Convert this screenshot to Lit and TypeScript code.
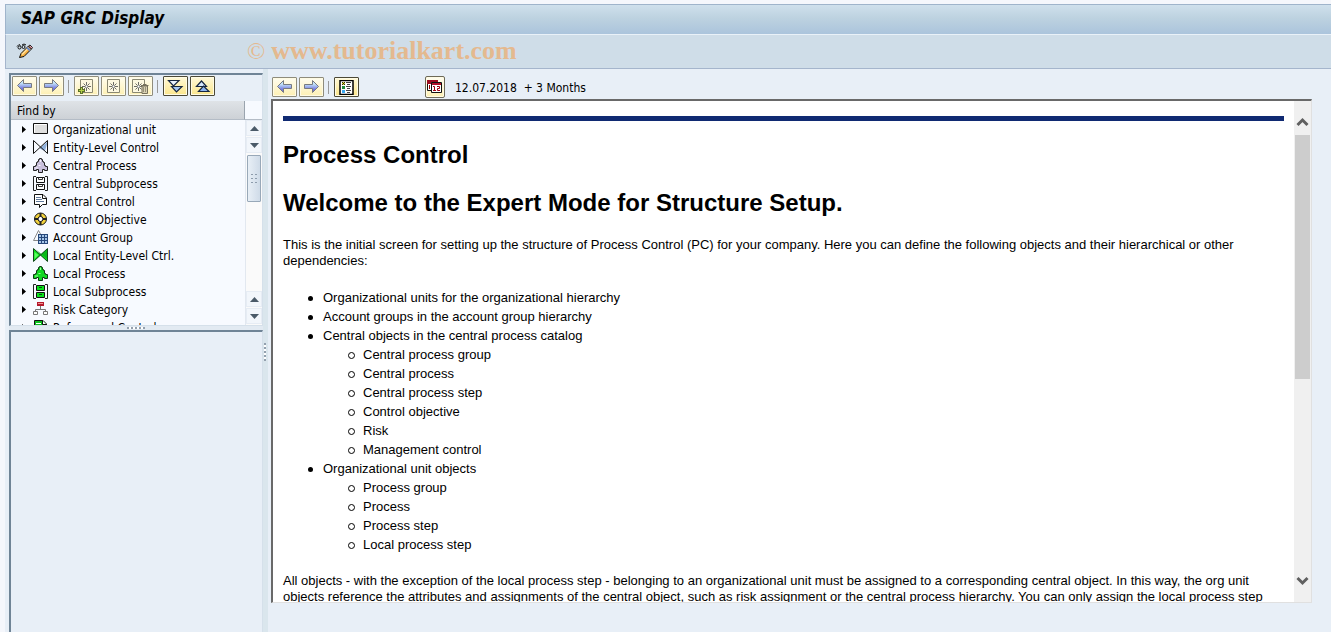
import { LitElement, html, css, svg, SVGTemplateResult } from "lit";
import { customElement, property } from "lit/decorators.js";

type Glyph = { w: number; h: number; art: SVGTemplateResult };

const arrowLeft = svg`
  <path d="M1.500 6.500 7.500 .5V4.500H15.500V8.500H7.500V12.500Z" fill="url(#ag)" stroke="#777a80"/>`;
const arrowRight = svg`
  <path d="M15.500 6.500 9.500 .5V4.500H1.500V8.500H9.500V12.500Z" fill="url(#ag)" stroke="#777a80"/>`;
const arrowFill = svg`<defs><linearGradient id="ag" x1="0" y1="0" x2="0" y2="1">
  <stop offset="0.3" stop-color="#c4e4f8"/><stop offset="0.75" stop-color="#7478e0"/></linearGradient></defs>`;
const sheet = svg`
  <path d="M2.500 .5H14.500V13.500H2.500Z" fill="#fdf8e0" stroke="#8a8872"/>
  <path d="M8.500 3V12M4 7.500H13M5.500 4.500 11.500 10.500M11.500 4.500 5.500 10.500" stroke="#6c6c66" fill="none"/>
  <path d="M7.500 6.500H9.500V8.500H7.500Z" fill="#fff"/>`;
const steps = "M6.500 .5H8.500V1.500H9.500V3.500H10.500V4.500H11.500V7.500H12.500V8.500H14.500V12.500H11.500V11.500H9.500V14.500H5.500V11.500H3.500V12.500H.5V8.500H2.500V7.500H3.500V4.500H4.500V3.500H5.500V1.500H6.500Z";
const brackets = svg`<path d="M3 .5H.5V14.500H3M12 .5H14.500V14.500H12" fill="none" stroke="#222"/>`;

const glyphs: Record<string, Glyph> = {
  back: { w: 17, h: 15, art: svg`${arrowFill}${arrowLeft}` },
  next: { w: 17, h: 15, art: svg`${arrowFill}${arrowRight}` },
  sheetAdd: { w: 17, h: 15, art: svg`${sheet}<path d="M3.500 8V15M0 11.500H7" stroke="#5a7028" stroke-width="3"/><path d="M3.500 9V14M1 11.500H6" stroke="#b6d24a"/>` },
  sheet: { w: 17, h: 15, art: sheet },
  sheetDelete: { w: 17, h: 15, art: svg`<g transform="translate(-2 0)">${sheet}</g>
    <path d="M9 6.500H16.500M11 5.500H14.500M10 7H15.500V14.500H10Z" fill="#d8d2b4" stroke="#77705c"/><path d="M11.500 8V13M13.500 8V13" stroke="#99917a"/>` },
  expandAll: { w: 17, h: 15, art: svg`<path d="M1.500 1.500H12L6.500 7Z" fill="#e8f2ff" stroke="#16263f" stroke-width="1.200"/><path d="M4.500 7.500H15L9.500 13Z" fill="#a5c8f4" stroke="#16263f" stroke-width="1.200"/>` },
  collapseAll: { w: 17, h: 15, art: svg`<path d="M2.500 7.500 7.500 2 12.500 7.500Z" fill="#d8eaff" stroke="#16263f" stroke-width="1.200"/><path d="M4.500 12.500 9.500 7 15 12.500Z" fill="#8fb6f0" stroke="#16263f" stroke-width="1.200"/>` },
  details: { w: 17, h: 15, art: svg`<path d="M2 .5H15V14.500H2Z" fill="#fff" stroke="#000" stroke-width="1.500"/>
    <path d="M4 2H7V5H4Z" fill="#e8e020"/><path d="M4 2 7 5M7 2 4 5" stroke="#222"/><path d="M4 6H7V9H4Z" fill="#1f8a3c"/><path d="M4 10H7V13H4Z" fill="#3aa8f0"/>
    <path d="M8 2.500H13M9 4.500H12M8 6.500H13M9 8.500H12M8 10.500H13M9 12.500H12" stroke="#444"/>` },
  calendar: { w: 16, h: 16, art: svg`<path d="M.5 1.500H10.500V11.500H.5Z" fill="#fff" stroke="#111"/><path d="M0 1H11V5H0Z" fill="#9c0c20"/><path d="M2.500 6V10" stroke="#900"/>
    <path d="M4.500 3.500H14.500V13.500H4.500Z" fill="#fff" stroke="#111"/><path d="M5 4H14V6H5Z" fill="#b01028"/>
    <path d="M6 7.500H7.500V11.500M6 11.500H9M10 7.500H12.500V9.500H10.500V11.500H13" fill="none" stroke="#a00010"/>` },
  toggle: { w: 18, h: 16, art: svg`<path d="M1 3.500 3 1.500 4.500 2.500M2 4.500A1.500 1.500 0 1 0 5 4.500 1.500 1.500 0 1 0 2 4.500M6 4A1.500 1.500 0 1 0 9 4 1.500 1.500 0 1 0 6 4M6 2 8 1 10 2" fill="none" stroke="#111"/>
    <path d="M3.500 14.500 5 10.500 12.500 3 15.500 6 8 13.500Z" fill="#f8b040" stroke="#111"/><path d="M6 11.500 12.500 5" stroke="#ffe3a0" stroke-width="1.500"/><path d="M12.500 3 14 2 16.500 4.500 15.500 6Z" fill="#f4a0b0" stroke="#222"/><path d="M11 4.500 14 7.500" stroke="#6888c8" stroke-width="2"/>` },
  orgUnit: { w: 16, h: 16, art: svg`<path d="M.5 1.500H14.500V11.500H.5Z" fill="#dedede" stroke="#111"/><path d="M1.500 10.500V2.500H13.500" fill="none" stroke="#fff"/>` },
  entity: { w: 16, h: 16, art: svg`<path d="M14 2V4L12 11 6.500 8.500Z" fill="#8fb0dc"/><path d="M.5 .5V13.500L14.500 .5V13.500L.5 .5" fill="none" stroke="#111"/>` },
  process: { w: 16, h: 16, art: svg`<path d=${steps} fill="#c9c0dc" stroke="#222"/><path d="M7.500 1.500V4M5.500 7.500H7.500M2 10H5" stroke="#f8f4ff"/>` },
  subprocess: { w: 16, h: 16, art: svg`${brackets}<path d="M3.500 1.500H11.500V6.500H3.500ZM3.500 8.500H11.500V13.500H3.500Z" fill="#fff" stroke="#111"/><path d="M5.500 1.500V3.500H9.500V1.500M5.500 8.500V10.500H9.500V8.500" fill="none" stroke="#333"/>` },
  control: { w: 16, h: 16, art: svg`<path d="M1.500 .5H10L13.500 4V10.500H9.500L6.500 13.500V10.500H1.500Z" fill="#fff" stroke="#111"/><path d="M9.500 .5V4.500H13.500" fill="none" stroke="#111"/><path d="M3 3.500H8M3 5.500H9M3 7.500H11" stroke="#5f789a"/>` },
  objective: { w: 16, h: 16, art: svg`<circle cx="7.500" cy="7" r="6" fill="#f2d23c" stroke="#111"/><path d="M7.500 1V13M1.500 7H13.500" stroke="#222" stroke-width="2"/><circle cx="7.500" cy="7" r="2.500" fill="#fff" stroke="#111"/>` },
  account: { w: 16, h: 16, art: svg`<path d="M5.500 .5 .5 10.500H5M5.500 .5 7.500 4" fill="none" stroke="#888"/><path d="M5 4H15V14H5Z" fill="#26477a"/><path d="M6 6H14M6 9H14M6 12H14" stroke="#a6c6e8" stroke-width="2" stroke-dasharray="2 1"/>` },
  entityLocal: { w: 16, h: 16, art: svg`<path d="M1 1V13L8 7ZM14 1V13L7 7Z" fill="#0be01c"/><path d="M3 1.500 14 11V1.500L8 7Z" fill="#08b818"/><path d="M.5 .5V13.500L14.500 .5V13.500Z" fill="none" stroke="#114a18"/><path d="M1.500 4V11L5.500 7Z" fill="#5cff60"/>` },
  processLocal: { w: 16, h: 16, art: svg`<path d=${steps} fill="#10d820" stroke="#0a3c10"/><path d="M7.500 1.500V4M5.500 7.500H7.500M2 10H5" stroke="#9cff9c"/>` },
  subprocessLocal: { w: 16, h: 16, art: svg`${brackets}<path d="M3.500 1.500H11.500V6.500H3.500ZM3.500 8.500H11.500V13.500H3.500Z" fill="#0be01c" stroke="#111"/><path d="M6 3.500H9M6 10.500H9" stroke="#0a4c14"/>` },
  risk: { w: 16, h: 16, art: svg`<path d="M7.500 4V7.500M2.500 9.500V7.500H12.500V9.500" fill="none" stroke="#777"/><path d="M4 0H11V4H4Z" fill="#b4182c"/><path d="M5 1.500H10" stroke="#f09090"/><path d="M.5 9.500H4.500V12.500H.5ZM10.500 9.500H14.500V12.500H10.500Z" fill="#fff" stroke="#777"/>` },
  referenced: { w: 16, h: 16, art: svg`<path d="M1.500 .5H10L13.500 4V12.500H1.500Z" fill="#0bc01c" stroke="#111"/><path d="M3 3.500H8M3 5.500H9" stroke="#fff"/><path d="M9.500 .5V4.500H13.500" fill="#fff" stroke="#111"/>` },
  triUp: { w: 9, h: 5, art: svg`<path d="M0 5 4.500 0 9 5Z" fill="#4a5a68"/>` },
  triDown: { w: 9, h: 5, art: svg`<path d="M0 0H9L4.500 5Z" fill="#4a5a68"/>` },
  node: { w: 5, h: 7, art: svg`<path d="M0 0 4 3.500 0 7Z" fill="#000"/>` },
  chevUp: { w: 13, h: 10, art: svg`<path d="M1.500 8 6.500 3 11.500 8" fill="none" stroke="#606060" stroke-width="3"/>` },
  chevDown: { w: 13, h: 10, art: svg`<path d="M1.500 2 6.500 7 11.500 2" fill="none" stroke="#606060" stroke-width="3"/>` },
};

@customElement("sap-icon")
export class SapIcon extends LitElement {
  @property() name = "";
  static styles = css`
    :host { display: block; flex: none; }
    svg { display: block; }
  `;
  render() {
    const g = glyphs[this.name];
    return html`<svg width=${g.w} height=${g.h} viewBox="0 0 ${g.w} ${g.h}" aria-hidden="true">${g.art}</svg>`;
  }
}

const tree: [string, string][] = [
  ["orgUnit", "Organizational unit"],
  ["entity", "Entity-Level Control"],
  ["process", "Central Process"],
  ["subprocess", "Central Subprocess"],
  ["control", "Central Control"],
  ["objective", "Control Objective"],
  ["account", "Account Group"],
  ["entityLocal", "Local Entity-Level Ctrl."],
  ["processLocal", "Local Process"],
  ["subprocessLocal", "Local Subprocess"],
  ["risk", "Risk Category"],
  ["referenced", "Referenced Control"],
];

const outline: { label: string; items?: string[] }[] = [
  { label: "Organizational units for the organizational hierarchy" },
  { label: "Account groups in the account group hierarchy" },
  {
    label: "Central objects in the central process catalog",
    items: ["Central process group", "Central process", "Central process step", "Control objective", "Risk", "Management control"],
  },
  { label: "Organizational unit objects", items: ["Process group", "Process", "Process step", "Local process step"] },
];

@customElement("app-root")
export class AppRoot extends LitElement {
  static styles = css`
    :host {
      display: flex; flex-direction: column; height: 100vh; box-sizing: border-box;
      padding: 4px 0 0 5px; background: #f5f7fc; overflow: hidden;
      font: 12px/18px "DejaVu Sans Condensed", "DejaVu Sans", sans-serif; color: #000;
    }
    *, ::before { box-sizing: border-box; }
    button { margin: 0; padding: 0; border: 0; background: none; display: flex; align-items: center; justify-content: center; flex: none; }
    .title {
      margin: 0; flex: none; height: 31px; padding-left: 15px; border: 1px solid #9fb4cb; border-right: 0; border-bottom-color: #e9f1f8;
      background: linear-gradient(#cfe0ec, #bdd2e0 45%, #abc4dc);
      font: italic bold 17px/27px "DejaVu Sans Condensed", "DejaVu Sans", sans-serif;
    }
    .appbar { flex: none; height: 34px; display: flex; align-items: center; padding: 0 0 2px 10px; background: #cfdde8; border: 1px solid #a5b5cc; border-top: 0; border-right: 0; }
    .mark { margin-left: 213px; color: #e4b98f; font: 24px/30px "Liberation Serif", serif; display: flex; gap: 6px; align-items: center; }
    .mark b { font-size: 26px; }
    .work { flex: 1; min-height: 0; display: flex; background: #e8eff7; }
    .left { flex: none; width: 258px; padding: 4px 0 0 4px; display: flex; flex-direction: column; }
    .pane { border-top: 2px solid #6f8496; border-left: 2px solid #6f8496; border-right: 1px solid #d5e0ea; display: flex; flex-direction: column; }
    .finder { flex: none; height: 253px; border-bottom: 1px solid #d5e0ea; }
    .tools { flex: none; height: 26px; padding: 1px 0 0 1px; display: flex; gap: 2px; align-items: flex-start; }
    .tool { width: 25px; height: 20px; border: 1px solid #8f8c7c; background: linear-gradient(#fffdf0, #fdf0b4); box-shadow: inset 0 0 0 1px #fffbe4; border-radius: 1px; }
    .tool.on { border-color: #4c4936; background: linear-gradient(#fff9d8, #fbe68c); }
    .tool.date { width: 20px; height: 22px; border-color: #6e6a58; border-radius: 2px; margin-left: 64px; }
    .sep { width: 1px; height: 13px; margin: 4px 3px 0 2px; background: #9a9a9a; }
    .body { flex: 1; min-height: 0; display: grid; grid-template-columns: 1fr 17px; grid-template-rows: 19px 1fr; background: #f7faff; }
    .head { margin: 0; padding: 1px 0 0 6px; font-size: 12px; font-weight: 400; line-height: 18px; background: linear-gradient(#dfe3e7, #cdd1d6); border-right: 1px solid #9aa4ae; border-bottom: 1px solid #b4bcc6; }
    .corner { border-bottom: 1px solid #b4bcc6; }
    .tree { margin: 0; padding: 1px 0 0; list-style: none; overflow: hidden; min-height: 0; }
    .node { display: flex; align-items: center; height: 18px; padding-left: 11px; }
    .node button { width: 5px; margin: 0 6px 2px 0; }
    .label { margin-left: 4px; white-space: nowrap; }
    .bar { display: flex; flex-direction: column; background: #fafafa; border-left: 1px solid #e2e8f0; padding-bottom: 1px; }
    .bar button { height: 16px; margin-bottom: 1px; background: #f2f6fb; border: 1px solid #e6ecf4; }
    .bar button:last-child { margin-bottom: 0; }
    .track { flex: 1; padding-top: 1px; }
    .grip { height: 47px; width: 14px; margin: 0 1px; border: 1px solid #98a8b8; border-radius: 1px; background: linear-gradient(90deg, #e8eff6, #cfdbe8); display: grid; place-content: center; }
    .dots { width: 6px; height: 9px; background: repeating-linear-gradient(#8d9cac 0 1px, transparent 1px 4px) 0 0 / 2px 9px no-repeat, repeating-linear-gradient(#8d9cac 0 1px, transparent 1px 4px) 4px 0 / 2px 9px no-repeat; }
    .hsplit { flex: none; height: 4px; display: grid; place-content: center; background: #e2eaf2; }
    .hdots { width: 18px; height: 2px; background: repeating-linear-gradient(90deg, #93a0ae 0 2px, #fff 2px 4px); }
    .lower { flex: 1; }
    .vsplit { flex: none; width: 5px; background: #dae6ed; padding: 274px 0 0 1px; }
    .vdots { width: 2px; height: 18px; background: repeating-linear-gradient(#93a0ae 0 2px, #fff 2px 4px); }
    .right { flex: 1; min-width: 0; padding: 7px 19px 29px 3px; display: flex; flex-direction: column; }
    .right .tools { height: 23px; }
    .right .date { margin-top: -1px; }
    .right .period { margin: 2px 0 0 8px; white-space: pre; }
    .frame { flex: 1; min-height: 0; display: flex; border: 2px solid #696969; border-right: 1px solid #e0e0e0; border-bottom: 1px solid #e0e0e0; background: #fff; }
    .doc { flex: 1; min-width: 0; overflow: hidden; padding: 15px 10px 0; font: 13px/16px "Liberation Sans", Arial, sans-serif; }
    .doc hr { margin: 0 0 20px; border: 0; height: 5px; background: #102a72; }
    .doc h2 { margin: 0 0 20px; font-size: 24px; line-height: 28px; }
    .doc p { margin: 0 0 19px; }
    .doc ul { margin: 0; padding-left: 40px; line-height: 19px; list-style: none; }
    .doc > ul { margin-bottom: 19px; }
    .doc li::before { content: ""; display: inline-block; width: 5px; height: 5px; margin: 0 10px 1px -15px; border-radius: 50%; background: #000; }
    .doc li li::before { width: 7px; height: 7px; margin: 0 8px 0 -15px; border: 1px solid #000; background: none; }
    .vbar { flex: none; width: 17px; background: #f0f0f0; display: flex; flex-direction: column; padding: 11px 1px 12px; }
    .vbar button { height: 19px; }
    .vtrack { flex: 1; padding-top: 4px; }
    .thumb { height: 56%; background: #cdcdcd; }
  `;

  private tool(icon: string, label: string, cls = "") {
    return html`<button class="tool ${cls}" aria-label=${label} title=${label}><sap-icon name=${icon}></sap-icon></button>`;
  }

  private scrollButton(icon: string, label: string) {
    return html`<button aria-label=${label}><sap-icon name=${icon}></sap-icon></button>`;
  }

  render() {
    return html`
      <h1 class="title">SAP GRC Display</h1>
      <div class="appbar">
        <button aria-label="Display / Change"><sap-icon name="toggle"></sap-icon></button>
        <div class="mark"><span>©</span><b>www.tutorialkart.com</b></div>
      </div>
      <div class="work">
        <div class="left">
          <section class="pane finder">
            <div class="tools">
              ${this.tool("back", "Back")}${this.tool("next", "Forward")}
              <span class="sep"></span>
              ${this.tool("sheetAdd", "Add to favorites")}${this.tool("sheet", "Favorites")}${this.tool("sheetDelete", "Remove favorite")}
              <span class="sep"></span>
              ${this.tool("expandAll", "Expand all", "on")}${this.tool("collapseAll", "Collapse all", "on")}
            </div>
            <div class="body">
              <h2 class="head">Find by</h2>
              <div class="corner"></div>
              <ul class="tree">
                ${tree.map(([icon, label]) => html`<li class="node">
                  <button aria-label="Expand ${label}"><sap-icon name="node"></sap-icon></button>
                  <sap-icon name=${icon}></sap-icon><span class="label">${label}</span>
                </li>`)}
              </ul>
              <div class="bar">
                ${this.scrollButton("triUp", "Scroll up")}${this.scrollButton("triDown", "Scroll down")}
                <div class="track"><div class="grip"><div class="dots"></div></div></div>
                ${this.scrollButton("triUp", "Scroll up")}${this.scrollButton("triDown", "Scroll down")}
              </div>
            </div>
          </section>
          <div class="hsplit"><div class="hdots"></div></div>
          <section class="pane lower"></section>
        </div>
        <div class="vsplit"><div class="vdots"></div></div>
        <main class="right">
          <div class="tools">
            ${this.tool("back", "Back")}${this.tool("next", "Forward")}
            <span class="sep"></span>
            ${this.tool("details", "Details", "on")}
            ${this.tool("calendar", "Select period", "date")}
            <span class="period">12.07.2018  + 3 Months</span>
          </div>
          <div class="frame">
            <article class="doc">
              <hr />
              <h2>Process Control</h2>
              <h2>Welcome to the Expert Mode for Structure Setup.</h2>
              <p>This is the initial screen for setting up the structure of Process Control (PC) for your company. Here you can define the following objects and their hierarchical or other dependencies:</p>
              <ul>
                ${outline.map((o) => html`<li>${o.label}${o.items ? html`<ul>${o.items.map((i) => html`<li>${i}</li>`)}</ul>` : ""}</li>`)}
              </ul>
              <p>All objects - with the exception of the local process step - belonging to an organizational unit must be assigned to a corresponding central object. In this way, the org unit objects reference the attributes and assignments of the central object, such as risk assignment or the central process hierarchy. You can only assign the local process step</p>
            </article>
            <div class="vbar">
              ${this.scrollButton("chevUp", "Scroll up")}
              <div class="vtrack"><div class="thumb"></div></div>
              ${this.scrollButton("chevDown", "Scroll down")}
            </div>
          </div>
        </main>
      </div>
    `;
  }
}
